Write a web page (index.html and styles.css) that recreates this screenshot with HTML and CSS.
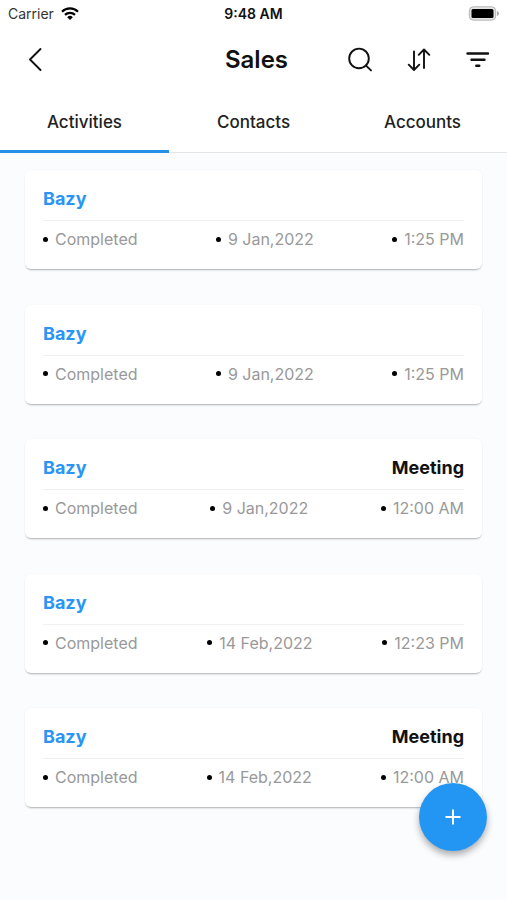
FILE: index.html
```html
<!DOCTYPE html>
<html lang="en">
<head>
<meta charset="utf-8">
<meta name="viewport" content="width=device-width, initial-scale=1">
<title>Sales</title>
<link rel="stylesheet" href="styles.css">
</head>
<body>
<div class="status">
  <div class="carrier">
    <span>Carrier</span>
    <svg width="18" height="14" viewBox="0 0 18 14" aria-hidden="true"><g fill="none" stroke="#000" stroke-width="2.3"><path d="M1 4.700a11.400 11.400 0 0 1 16 0"/><path d="M4 7.900a7.200 7.200 0 0 1 10 0"/></g><path d="M9 13.100l-2.800-2.900a4 4 0 0 1 5.600 0z"/></svg>
  </div>
  <span class="clock">9:48 AM</span>
  <svg class="battery" width="31" height="15" viewBox="0 0 31 15" aria-hidden="true"><rect x="1.300" y=".8" width="26.400" height="13.400" rx="4" fill="#e4e4e4" stroke="#b5b5b5" stroke-width="1"/><rect x="3.500" y="3" width="22" height="9" rx="1.500"/><path d="M29 5v5q2-.7 2-2.500t-2-2.500z" fill="#aaa"/></svg>
</div>
<header class="header">
  <button class="icon" aria-label="Back"><svg width="28" height="28" viewBox="0 0 28 28"><path d="M19.500 3L9 13.500 19.500 24"/></svg></button>
  <h1>Sales</h1>
  <div class="actions">
    <button class="icon" aria-label="Search"><svg width="28" height="28" viewBox="0 0 28 28"><circle cx="13" cy="12.400" r="9.800"/><path d="M19.800 19.400l5.200 5"/></svg></button>
    <button class="icon" aria-label="Sort"><svg width="28" height="28" viewBox="0 0 28 28"><path d="M9 5.500V24M3.700 18.700L9 24l5.300-5.300M19 22V3.500M13.700 8.800L19 3.500l5.300 5.300"/></svg></button>
    <button class="icon" aria-label="Filter"><svg width="28" height="28" viewBox="0 0 28 28"><path class="bars" d="M3.500 7.500h20.500M7.500 13.700h13M12.300 19.700h3"/></svg></button>
  </div>
</header>
<nav class="tabs">
  <a href="#activities" class="active" aria-current="page">Activities</a>
  <a href="#contacts">Contacts</a>
  <a href="#accounts">Accounts</a>
</nav>
<main class="list">
  <article class="card">
    <div class="top"><h2>Bazy</h2></div>
    <ul class="meta"><li>Completed</li><li>9 Jan,2022</li><li>1:25 PM</li></ul>
  </article>
  <article class="card">
    <div class="top"><h2>Bazy</h2></div>
    <ul class="meta"><li>Completed</li><li>9 Jan,2022</li><li>1:25 PM</li></ul>
  </article>
  <article class="card">
    <div class="top"><h2>Bazy</h2><strong>Meeting</strong></div>
    <ul class="meta"><li>Completed</li><li>9 Jan,2022</li><li>12:00 AM</li></ul>
  </article>
  <article class="card">
    <div class="top"><h2>Bazy</h2></div>
    <ul class="meta"><li>Completed</li><li>14 Feb,2022</li><li>12:23 PM</li></ul>
  </article>
  <article class="card">
    <div class="top"><h2>Bazy</h2><strong>Meeting</strong></div>
    <ul class="meta"><li>Completed</li><li>14 Feb,2022</li><li>12:00 AM</li></ul>
  </article>
</main>
<button class="fab" aria-label="Add activity"><svg width="16" height="16" viewBox="0 0 16 16" aria-hidden="true"><path d="M8 .5v15M.5 8h15"/></svg></button>
</body>
</html>
```
FILE: styles.css
```css
* {
  box-sizing: border-box;
}

body {
  margin: 0;
  min-height: 100vh;
  display: flex;
  flex-direction: column;
  background: #fafcfe;
  color: #111;
  font-family: Inter, "Liberation Sans", sans-serif;
}

h1,
h2,
ul {
  margin: 0;
  padding: 0;
}

.status,
.header {
  display: grid;
  grid-template-columns: 1fr auto 1fr;
  align-items: center;
  background: #fff;
}

.status {
  height: 27px;
  padding: 0 8px;
  font-size: 14px;
}

.carrier {
  display: flex;
  align-items: center;
  gap: 7px;
  color: #333;
}

.clock {
  font-weight: 600;
}

.battery {
  justify-self: end;
}

.header {
  height: 65px;
  padding: 0 15px 0 21px;
}

.header h1 {
  font-size: 24px;
  line-height: 28px;
  font-weight: 600;
}

.actions {
  display: flex;
  justify-content: flex-end;
  gap: 31px;
}

.icon {
  width: 28px;
  height: 28px;
  padding: 0;
  border: 0;
  background: none;
}

.icon svg {
  display: block;
  fill: none;
  stroke: #111;
  stroke-width: 1.9;
  stroke-linecap: round;
  stroke-linejoin: round;
}

.icon .bars {
  stroke-width: 2.4;
}

.tabs {
  display: grid;
  grid-template-columns: repeat(3, 1fr);
  height: 61px;
  background: #fff;
  border-bottom: 1px solid #e3e5e8;
}

.tabs a {
  display: flex;
  align-items: center;
  justify-content: center;
  height: 61px;
  padding-top: 2px;
  border-bottom: 3px solid transparent;
  color: #222;
  font-size: 17px;
  font-weight: 500;
  text-decoration: none;
}

.tabs .active {
  border-color: #2490e8;
}

.list {
  flex: 1;
  display: flex;
  flex-direction: column;
  justify-content: space-between;
  gap: 32px;
  padding: 17px 25px 93px;
}

.card {
  padding: 13px 18px 20px;
  border-radius: 6px;
  background: #fff;
  box-shadow: 0 2px 2px -1px rgba(0, 0, 0, 0.3), 0 0 2px rgba(0, 0, 0, 0.05);
}

.top {
  display: flex;
  align-items: center;
  justify-content: space-between;
  height: 38px;
  padding-bottom: 5px;
  border-bottom: 1px solid #f0f0f0;
}

.top h2,
.top strong {
  font-size: 18px;
  line-height: 24px;
  font-weight: 700;
}

.top h2 {
  color: #2b95f5;
}

.meta {
  display: flex;
  justify-content: space-between;
  padding-top: 8px;
  list-style: none;
  color: #999;
  font-size: 16px;
  line-height: 20px;
}

.meta li {
  display: flex;
  align-items: center;
  gap: 7px;
}

.meta li::before {
  content: "";
  width: 5px;
  height: 5px;
  border-radius: 50%;
  background: #000;
}

.fab {
  position: fixed;
  right: 20px;
  bottom: 49px;
  display: flex;
  align-items: center;
  justify-content: center;
  width: 68px;
  height: 68px;
  padding: 0;
  border: 0;
  border-radius: 50%;
  background: #2396f3;
  box-shadow: 0 4px 7px rgba(0, 0, 0, 0.32);
}

.fab svg {
  fill: none;
  stroke: #fff;
  stroke-width: 2;
}
```
